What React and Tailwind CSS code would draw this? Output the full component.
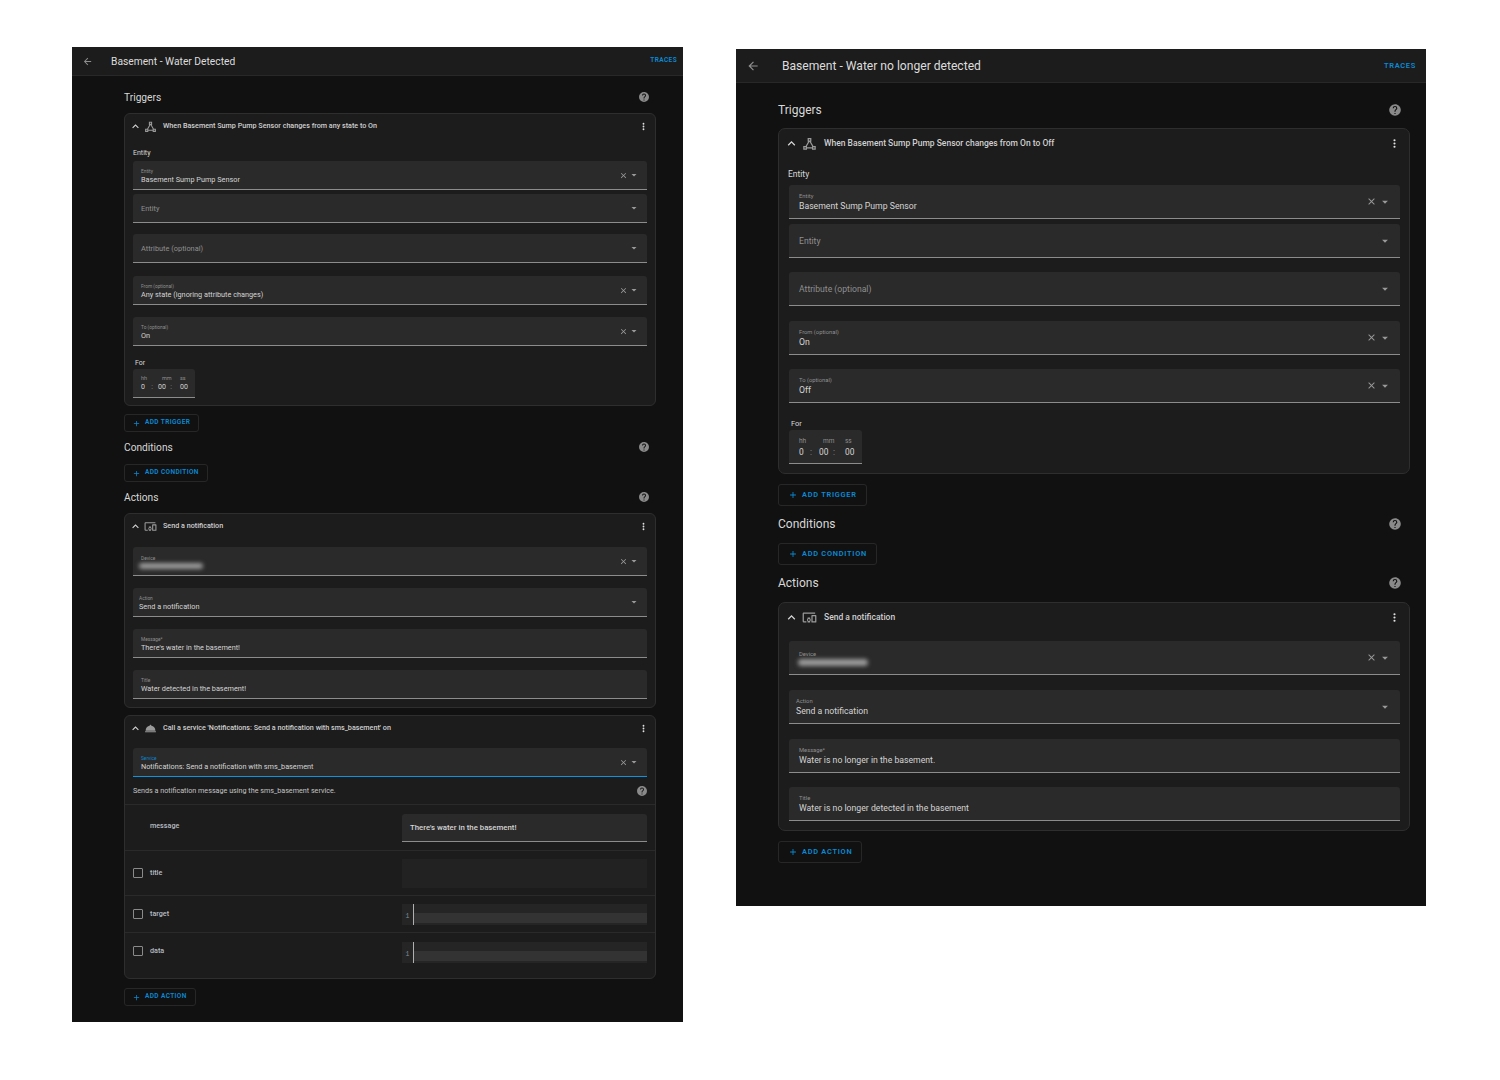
import React from 'react';

const icons = {
  back: 'M20,11V13H8L13.5,18.5L12.08,19.92L4.16,12L12.08,4.08L13.5,5.5L8,11H20Z',
  chevron: 'M7.41,15.41L12,10.83L16.59,15.41L18,14L12,8L6,14L7.41,15.41Z',
  dots: 'M12,16A2,2 0 0,1 14,18A2,2 0 0,1 12,20A2,2 0 0,1 10,18A2,2 0 0,1 12,16M12,10A2,2 0 0,1 14,12A2,2 0 0,1 12,14A2,2 0 0,1 10,12A2,2 0 0,1 12,10M12,4A2,2 0 0,1 14,6A2,2 0 0,1 12,8A2,2 0 0,1 10,6A2,2 0 0,1 12,4Z',
  help: 'M15.07,11.25L14.17,12.17C13.45,12.89 13,13.5 13,15H11V14.5C11,13.39 11.45,12.39 12.17,11.67L13.41,10.41C13.78,10.05 14,9.55 14,9C14,7.89 13.1,7 12,7A2,2 0 0,0 10,9H8A4,4 0 0,1 12,5A4,4 0 0,1 16,9C16,9.88 15.64,10.67 15.07,11.25M13,19H11V17H13M12,2A10,10 0 0,0 2,12A10,10 0 0,0 12,22A10,10 0 0,0 22,12C22,6.47 17.5,2 12,2Z',
  close: 'M19,6.41L17.59,5L12,10.59L6.41,5L5,6.41L10.59,12L5,17.59L6.41,19L12,13.41L17.59,19L19,17.59L13.41,12L19,6.41Z',
  down: 'M7,10L12,15L17,10H7Z',
  plus: 'M19,13H13V19H11V13H5V11H11V5H13V11H19V13Z',
  triangle: 'M9,3V9H9.73L5.79,16H2V22H8V20H16V22H22V16H18.21L14.27,9H15V3H9M11,5H13V7H11V5M12,9.04L16,16.15V18H8V16.15L12,9.04M4,18H6V20H4V18M18,18H20V20H18V18Z',
  devices: 'M3,6H21V4H3C1.9,4 1,4.9 1,6V18A2,2 0 0,0 3,20H7V18H3V6M13,12H9V13.78C8.39,14.33 8,15.11 8,16C8,16.89 8.39,17.67 9,18.22V20H13V18.22C13.61,17.67 14,16.88 14,16C14,15.12 13.61,14.33 13,13.78V12M11,17.5A1.5,1.5 0 0,1 9.5,16A1.5,1.5 0 0,1 11,14.5A1.5,1.5 0 0,1 12.5,16A1.5,1.5 0 0,1 11,17.5M22,8H16A1,1 0 0,0 15,9V19A1,1 0 0,0 16,20H22A1,1 0 0,0 23,19V9A1,1 0 0,0 22,8M21,18H17V10H21V18Z',
  service: 'M2,17H22V19H2V17M12,5A1.5,1.5 0 0,1 13.45,6.9C17.7,7.6 21,11 21,15.5V16H3V15.5C3,11 6.3,7.6 10.55,6.9A1.5,1.5 0 0,1 12,5Z',
};

function Icon({ name, className }) {
  return (
    <svg viewBox="0 0 24 24" fill="currentColor" className={'shrink-0 ' + className}>
      <path d={icons[name]} />
    </svg>
  );
}

const small = {
  panel: 'w-[611px] h-[975px] mt-0',
  header: 'h-[29px]',
  back: 'w-[11px] h-[11px] ml-[10px] mr-[18px]',
  title: 'text-[10.25px] pt-[1px]',
  traces: 'text-[6.5px] mr-[6px] tracking-[0.06em]',
  section: 'ml-[52px] mr-[27px]',
  heading: 'h-[14px] text-[10.2px]',
  headingText: 'pt-[1px]',
  helpIcon: 'w-[12px] h-[12px] mr-[6px]',
  card: 'rounded-[6px]',
  cardHead: 'h-[25px] pl-[4px] pr-[6px]',
  chevron: 'w-[13px] h-[13px]',
  cardIcon: 'w-[13px] h-[13px] ml-[2px] mr-[6px]',
  cardTitle: 'text-[7.2px]',
  kebab: 'w-[11px] h-[11px]',
  inset: 'mx-[8px]',
  label: 'h-[14px] text-[7px]',
  field: 'h-[29px] pl-[8px] pr-[7px]',
  fieldBlock: 'pt-[2px]',
  fieldLabel: 'text-[4.8px] leading-[7px]',
  fieldValue: 'text-[7.3px] leading-[10px]',
  placeholder: 'text-[7.4px]',
  x: 'w-[9px] h-[9px]',
  caret: 'w-[12px] h-[12px]',
  tight: '-ml-[2px]',
  time: 'w-[62px] h-[29px]',
  timeHead: 'text-[5.5px] leading-[8px]',
  timeVal: 'text-[7px] leading-[10px]',
  hh: 'w-[20px] pl-[8px]',
  mm: 'w-[23px] pl-[5px] pr-[4px]',
  mmHead: 'ml-[4px]',
  ss: 'w-[19px] pl-[4px]',
  button: 'h-[18px] pl-[7px] pr-[8px] rounded-[3px]',
  plus: 'w-[9px] h-[9px] mr-[4px]',
  buttonText: 'text-[6.5px] tracking-[0.06em]',
  blur: 'w-[64px] h-[6px] mt-[1px] -ml-[2px]',
};

const large = {
  panel: 'w-[690px] h-[857px] mt-[2px]',
  header: 'h-[34px]',
  back: 'w-[14px] h-[14px] ml-[10px] mr-[22px]',
  title: 'text-[12.1px] pt-[1px]',
  traces: 'text-[7.5px] mr-[10px] tracking-[0.09em]',
  section: 'ml-[42px] mr-[16px]',
  heading: 'h-[16px] text-[12px]',
  headingText: '',
  helpIcon: 'w-[14px] h-[14px] mr-[8px]',
  card: 'rounded-[7px]',
  cardHead: 'h-[29px] pl-[5px] pr-[8px]',
  chevron: 'w-[15px] h-[15px]',
  cardIcon: 'w-[15px] h-[15px] ml-[3px] mr-[7px]',
  cardTitle: 'text-[8.5px]',
  kebab: 'w-[13px] h-[13px]',
  inset: 'ml-[10px] mr-[9px]',
  label: 'h-[14px] text-[8.5px]',
  field: 'h-[34px] pl-[10px] pr-[8px]',
  fieldBlock: 'pt-[2px]',
  fieldLabel: 'text-[5.8px] leading-[7px]',
  fieldValue: 'text-[8.7px] leading-[12px]',
  placeholder: 'text-[8.65px]',
  x: 'w-[11px] h-[11px] mr-[1px]',
  caret: 'w-[14px] h-[14px]',
  tight: '-ml-[3px]',
  time: 'w-[73px] h-[34px] pt-[2px]',
  timeHead: 'text-[6.5px] leading-[9px]',
  timeVal: 'text-[8.4px] leading-[12px]',
  hh: 'w-[23px] pl-[10px]',
  mm: 'w-[28px] pl-[7px] pr-[5px]',
  mmHead: 'ml-[4px]',
  ss: 'w-[22px] pl-[5px]',
  button: 'h-[22px] pl-[9px] pr-[9px] rounded-[3px]',
  plus: 'w-[10px] h-[10px] mr-[4px]',
  buttonText: 'text-[7.4px] tracking-[0.1em]',
  blur: 'w-[70px] h-[7px] mt-[1px] -ml-[1px]',
};

function Heading({ s, children, className }) {
  return (
    <div className={'flex items-center justify-between text-[#d8d8d8] ' + s.heading + ' ' + className}>
      <span className={s.headingText}>{children}</span>
      <Icon name="help" className={'text-[#8a8a8a] ' + s.helpIcon} />
    </div>
  );
}

function AddButton({ s, children, className }) {
  return (
    <div className={'flex w-fit items-center border border-[#272727] text-[#0a8ad6] font-semibold ' + s.button + ' ' + className}>
      <Icon name="plus" className={s.plus} />
      <span className={s.buttonText}>{children}</span>
    </div>
  );
}

function Card({ s, icon, title, children, className }) {
  return (
    <div className={'bg-[#1c1c1c] border border-[#2e2e2e] ' + s.card + ' ' + className}>
      <div className={'flex items-center ' + s.cardHead}>
        <Icon name="chevron" className={'text-[#d8d8d8] ' + s.chevron} />
        <Icon name={icon} className={'text-[#9a9a9a] ' + s.cardIcon} />
        <span className={'flex-1 font-medium text-[#d0d0d0] ' + s.cardTitle}>{title}</span>
        <Icon name="dots" className={'text-[#e1e1e1] ' + s.kebab} />
      </div>
      {children}
    </div>
  );
}

function Field({ s, label, value, placeholder, clear, caret, blurred, focused, tight, className }) {
  return (
    <div
      className={
        'flex items-center bg-[#2a2a2a] rounded-t-[3px] border-b ' +
        (focused ? 'border-[#0a94e2] ' : 'border-[#8c8c8c] ') +
        s.field + ' ' + s.inset + ' ' + className
      }
    >
      <div className={'flex-1 min-w-0 ' + s.fieldBlock + ' ' + (tight ? s.tight : '')}>
        {placeholder ? (
          <div className={'text-[#8f8f8f] ' + s.placeholder}>{placeholder}</div>
        ) : (
          <>
            <div className={(focused ? 'text-[#0a86d0] ' : 'text-[#8f8f8f] ') + s.fieldLabel}>{label}</div>
            {blurred ? (
              <div className={'bg-[#9a9a9a] rounded-full blur-[2px] ' + s.blur} />
            ) : (
              <div className={'text-[#d4d4d4] ' + s.fieldValue}>{value}</div>
            )}
          </>
        )}
      </div>
      {clear && <Icon name="close" className={'text-[#9a9a9a] ' + s.x} />}
      {caret && <Icon name="down" className={'text-[#9a9a9a] ' + s.caret} />}
    </div>
  );
}

function TimeInput({ s, className }) {
  return (
    <div className={'flex bg-[#2a2a2a] rounded-t-[3px] border-b border-[#8c8c8c] items-center ' + s.time + ' ' + className}>
      <div className={s.hh}>
        <div className={'text-[#8f8f8f] ' + s.timeHead}>hh</div>
        <div className={'flex justify-between text-[#d4d4d4] ' + s.timeVal}>
          <span>0</span>
          <span className="text-[#8f8f8f]">:</span>
        </div>
      </div>
      <div className={s.mm}>
        <div className={'text-[#8f8f8f] ' + s.timeHead + ' ' + s.mmHead}>mm</div>
        <div className={'flex justify-between text-[#d4d4d4] ' + s.timeVal}>
          <span>00</span>
          <span className="text-[#8f8f8f]">:</span>
        </div>
      </div>
      <div className={s.ss}>
        <div className={'text-[#8f8f8f] ' + s.timeHead}>ss</div>
        <div className={'text-[#d4d4d4] ' + s.timeVal}>00</div>
      </div>
    </div>
  );
}

function Shell({ s, title, children }) {
  return (
    <div className={'shrink-0 bg-[#111111] overflow-hidden ' + s.panel} style={{ fontFamily: 'Roboto, sans-serif' }}>
      <div className={'flex items-center bg-[#1c1c1c] border-b border-[#282828] ' + s.header}>
        <Icon name="back" className={'text-[#8f8f8f] ' + s.back} />
        <span className={'flex-1 text-[#dcdcdc] ' + s.title}>{title}</span>
        <span className={'text-[#0a8ad6] font-semibold ' + s.traces}>TRACES</span>
      </div>
      <div className={s.section}>{children}</div>
    </div>
  );
}

function CodeField() {
  return (
    <div className="w-[245px] h-[21px] bg-[#252525] flex">
      <div className="w-[11px] h-full flex items-end justify-center pb-[3px] text-[6.5px] text-[#7f8b99]" style={{ fontFamily: '"Liberation Mono", monospace' }}>1</div>
      <div className="w-px h-full bg-[#b0b0b0]" />
      <div className="flex-1 mt-[9px] mb-[2px] bg-[#333333]" />
    </div>
  );
}

function RowCheck({ children }) {
  return (
    <div className="flex items-center pl-[8px] text-[7.2px] font-medium text-[#b8bcc2]">
      <span className="w-[10px] h-[10px] border border-[#8a8a8a] rounded-[1px] mr-[7px]" />
      {children}
    </div>
  );
}

function LeftPanel() {
  const s = small;
  return (
    <Shell s={s} title="Basement - Water Detected">
      <Heading s={s} className="mt-[14px]">Triggers</Heading>
      <Card s={s} icon="triangle" title="When Basement Sump Pump Sensor changes from any state to On" className="mt-[9px] pb-[7px]">
        <div className={'mt-[7px] mx-[8px] flex items-center text-[#d8d8d8] ' + s.label}>Entity</div>
        <Field s={s} label="Entity" value="Basement Sump Pump Sensor" clear caret className="mt-[1px]" />
        <Field s={s} placeholder="Entity" caret className="mt-[4px]" />
        <Field s={s} placeholder="Attribute (optional)" caret className="mt-[11px]" />
        <Field s={s} label="From (optional)" value="Any state (ignoring attribute changes)" clear caret className="mt-[13px]" />
        <Field s={s} label="To (optional)" value="On" clear caret className="mt-[12px]" />
        <div className="mt-[11px] mx-[10px] h-[12px] flex items-center text-[7px] text-[#d8d8d8]">For</div>
        <TimeInput s={s} className="ml-[8px]" />
      </Card>
      <AddButton s={s} className="mt-[8px]">ADD TRIGGER</AddButton>
      <Heading s={s} className="mt-[8px]">Conditions</Heading>
      <AddButton s={s} className="mt-[10px]">ADD CONDITION</AddButton>
      <Heading s={s} className="mt-[8px]">Actions</Heading>
      <Card s={s} icon="devices" title="Send a notification" className="mt-[9px] pb-[8px]">
        <Field s={s} label="Device" blurred clear caret className="mt-[8px]" />
        <Field s={s} label="Action" value="Send a notification" caret tight className="mt-[12px]" />
        <Field s={s} label="Message*" value="There's water in the basement!" className="mt-[12px]" />
        <Field s={s} label="Title" value="Water detected in the basement!" className="mt-[12px]" />
      </Card>
      <Card s={s} icon="service" title="Call a service 'Notifications: Send a notification with sms_basement' on" className="mt-[7px]">
        <Field s={s} label="Service" value="Notifications: Send a notification with sms_basement" clear caret focused className="mt-[7px]" />
        <div className="mt-[8px] mx-[8px] h-[12px] flex items-center justify-between text-[7.2px] text-[#c4c4c4]">
          <span>Sends a notification message using the sms_basement service.</span>
          <Icon name="help" className="w-[12px] h-[12px] text-[#8a8a8a] -mr-[1px]" />
        </div>
        <div className="mt-[7px] h-[46px] border-t border-[#2a2a2a] flex justify-between pr-[8px]">
          <div className="pl-[25px] pt-[16px] text-[7.2px] font-medium text-[#b8bcc2]">message</div>
          <div className="mt-[9px] w-[245px] h-[28px] bg-[#2a2a2a] border-b border-[#8c8c8c] rounded-t-[3px] flex items-center px-[8px] text-[7.8px] font-medium text-[#d4d4d4]">There's water in the basement!</div>
        </div>
        <div className="h-[45px] border-t border-[#2a2a2a] flex items-center justify-between pr-[8px]">
          <RowCheck>title</RowCheck>
          <div className="w-[245px] h-[29px] bg-[#222222]" />
        </div>
        <div className="h-[37px] border-t border-[#2a2a2a] flex items-center justify-between pr-[8px]">
          <RowCheck>target</RowCheck>
          <CodeField />
        </div>
        <div className="h-[46px] border-t border-[#2a2a2a] flex items-start justify-between pr-[8px] pt-[9px]">
          <div className="pt-[4px]"><RowCheck>data</RowCheck></div>
          <CodeField />
        </div>
      </Card>
      <AddButton s={s} className="mt-[9px]">ADD ACTION</AddButton>
    </Shell>
  );
}

function RightPanel() {
  const s = large;
  return (
    <Shell s={s} title="Basement - Water no longer detected">
      <Heading s={s} className="mt-[19px]">Triggers</Heading>
      <Card s={s} icon="triangle" title="When Basement Sump Pump Sensor changes from On to Off" className="mt-[10px] pb-[9px]">
        <div className={'mt-[9px] mx-[9px] flex items-center text-[#d8d8d8] ' + s.label}>Entity</div>
        <Field s={s} label="Entity" value="Basement Sump Pump Sensor" clear caret className="mt-[4px]" />
        <Field s={s} placeholder="Entity" caret className="mt-[5px]" />
        <Field s={s} placeholder="Attribute (optional)" caret className="mt-[14px]" />
        <Field s={s} label="From (optional)" value="On" clear caret className="mt-[15px]" />
        <Field s={s} label="To (optional)" value="Off" clear caret className="mt-[14px]" />
        <div className="mt-[15px] mx-[12px] h-[12px] flex items-center text-[7.5px] text-[#d8d8d8]">For</div>
        <TimeInput s={s} className="ml-[10px]" />
      </Card>
      <AddButton s={s} className="mt-[10px]">ADD TRIGGER</AddButton>
      <Heading s={s} className="mt-[10px]">Conditions</Heading>
      <AddButton s={s} className="mt-[11px]">ADD CONDITION</AddButton>
      <Heading s={s} className="mt-[10px]">Actions</Heading>
      <Card s={s} icon="devices" title="Send a notification" className="mt-[11px] pb-[9px]">
        <Field s={s} label="Device" blurred clear caret className="mt-[9px]" />
        <Field s={s} label="Action" value="Send a notification" caret tight className="mt-[15px]" />
        <Field s={s} label="Message*" value="Water is no longer in the basement." className="mt-[15px]" />
        <Field s={s} label="Title" value="Water is no longer detected in the basement" className="mt-[14px]" />
      </Card>
      <AddButton s={s} className="mt-[10px]">ADD ACTION</AddButton>
    </Shell>
  );
}

export default function App() {
  return (
    <div className="min-h-[1080px] bg-white flex items-start gap-[53px] pl-[72px] pt-[47px]">
      <LeftPanel />
      <RightPanel />
    </div>
  );
}
